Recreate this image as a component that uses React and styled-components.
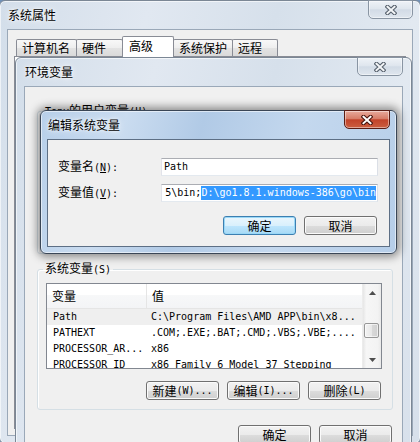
import React from 'react'
import styled, { createGlobalStyle, css } from 'styled-components'

const CJK = `"Noto Sans CJK SC", "Noto Sans", sans-serif`
const MONO = `"DejaVu Sans Mono", "Liberation Mono", monospace`

const GlobalStyle = createGlobalStyle`
  html, body {
    margin: 0;
    padding: 0;
    background: #6f90b8;
  }
`

const Desktop = styled.div`
  position: relative;
  width: 420px;
  height: 442px;
  overflow: hidden;
  background: #6f90b8;
  font-family: ${CJK};
  font-size: 12px;
  line-height: 14px;
  color: #000;
`

// a window lies on the desktop, so it is placed by its coordinates
const Window = styled.div`
  position: absolute;
  left: ${p => p.$x}px;
  top: ${p => p.$y}px;
  width: ${p => p.$w}px;
  height: ${p => p.$h}px;
  box-sizing: border-box;
  display: flex;
  flex-direction: column;
  padding: 0 ${p => p.$pad}px ${p => p.$pad}px;
  border: 1px solid ${p => (p.$active ? '#3a4656' : '#7b8795')};
  border-radius: 6px;
  background: ${p =>
    p.$active
      ? 'linear-gradient(105deg, #b7cfe9 0%, #cadcf0 22%, #b1cae6 42%, #c4d8ee 68%, #b6cee9 100%)'
      : 'linear-gradient(105deg, #d3deea 0%, #e1e8f1 28%, #d6e0eb 52%, #e2e9f1 78%, #d7e0eb 100%)'};
  box-shadow: ${p =>
    p.$active
      ? '0 0 9px 3px rgba(0, 0, 0, 0.42), inset 0 0 0 1px rgba(255, 255, 255, 0.55)'
      : 'inset 0 0 0 1px rgba(255, 255, 255, 0.6)'};
`

const TitleBar = styled.div`
  display: flex;
  align-items: flex-start;
  height: 28px;
  flex-shrink: 0;
`

const Title = styled.div`
  padding: 7px 0 0 1px;
  text-shadow: 0 0 7px rgba(255, 255, 255, 0.95), 0 0 3px #fff;
`

const CloseBtn = styled.div`
  box-sizing: border-box;
  width: ${p => p.$w}px;
  height: 19px;
  margin-left: auto;
  margin-top: -1px;
  display: flex;
  align-items: center;
  justify-content: center;
  border: 1px solid ${p => (p.$active ? '#5a1d14' : '#8995a3')};
  border-radius: 0 0 5px 5px;
  background: ${p =>
    p.$active
      ? 'linear-gradient(#e8aa9c 0%, #d77d68 45%, #c2432a 52%, #cb5e40 100%)'
      : 'linear-gradient(#eef2f7 0%, #dfe6ee 45%, #d2dbe6 52%, #dfe6ee 100%)'};
  box-shadow: inset 0 0 0 1px rgba(255, 255, 255, 0.45);
`

const Client = styled.div`
  flex: 1;
  min-height: 0;
  display: flex;
  flex-direction: column;
  background: #f0f0f0;
  border: 1px solid ${p => (p.$active ? '#5d6f85' : '#9aa8b8')};
`

/* tabs of the system properties window */
const TabRow = styled.div`
  display: flex;
  align-items: flex-end;
  height: 20px;
  padding: 6px 0 0 8px;
  flex-shrink: 0;
`

const Tab = styled.div`
  box-sizing: border-box;
  width: ${p => p.$w}px;
  height: ${p => (p.$sel ? 21 : 17)}px;
  margin-left: ${p => (p.$first ? 0 : -1)}px;
  margin-bottom: ${p => (p.$sel ? -1 : 0)}px;
  padding: ${p => (p.$sel ? '2px 0 0 6px' : '1px 0 0 5px')};
  border: 1px solid #898c95;
  border-bottom: none;
  border-radius: 2px 2px 0 0;
  position: relative;
  z-index: ${p => (p.$sel ? 1 : 0)};
  background: ${p =>
    p.$sel ? '#fff' : 'linear-gradient(#f8f8f8 0%, #eeeeee 50%, #e3e3e3 51%, #dadada 100%)'};
`

const TabPanel = styled.div`
  flex: 1;
  margin: 0 6px 6px;
  background: #fff;
  border: 1px solid #898c95;
`

/* environment variables window */
const EnvBody = styled.div`
  display: flex;
  flex-direction: column;
  padding: 16px 9px 0 12px;
`

const Group = styled.fieldset`
  margin: 0;
  min-width: 0;
  box-sizing: border-box;
  padding: 0 10px 9px 8px;
  border: 1px solid #d5dfe5;
  border-radius: 3px;
  box-shadow: inset 1px 1px 0 #fff;
  ${p => p.$h && css`height: ${p.$h}px;`}
  & + & {
    margin-top: 7px;
  }
`

const Legend = styled.legend`
  padding: 0 2px;
  margin-left: -3px;
  line-height: 14px;
`

const Mono = styled.span`
  font-family: ${MONO};
  font-size: 10px;
`

const Key = styled.span`
  text-decoration: underline;
`

const List = styled.div`
  margin-top: 6px;
  height: 86px;
  box-sizing: border-box;
  border: 1px solid #828790;
  background: #fff;
  display: flex;
  overflow: hidden;
`

const ListMain = styled.div`
  flex: 1;
  min-width: 0;
  display: flex;
  flex-direction: column;
  overflow: hidden;
`

const Header = styled.div`
  display: flex;
  height: 25px;
  flex-shrink: 0;
  box-sizing: border-box;
  border-bottom: 1px solid #e5e5e5;
  background: linear-gradient(#ffffff 0%, #ffffff 45%, #f7f8f9 46%, #f3f4f6 100%);
`

const HeadCell = styled.div`
  box-sizing: border-box;
  width: ${p => (p.$w ? `${p.$w}px` : 'auto')};
  flex: ${p => (p.$w ? 'none' : 1)};
  display: flex;
  align-items: center;
  padding-left: ${p => p.$pl}px;
  border-right: ${p => (p.$w ? '1px solid #e5e5e5' : 'none')};
`

const Row = styled.div`
  display: flex;
  height: 16px;
  flex-shrink: 0;
  background: ${p => (p.$sel ? '#efefef' : '#fff')};
  font-family: ${MONO};
  font-size: 10px;
  line-height: 16px;
  white-space: nowrap;
`

const Cell = styled.div`
  box-sizing: border-box;
  width: ${p => (p.$w ? `${p.$w}px` : 'auto')};
  flex: ${p => (p.$w ? 'none' : 1)};
  padding-left: ${p => p.$pl}px;
  overflow: hidden;
`

const ScrollBar = styled.div`
  width: 18px;
  flex-shrink: 0;
  display: flex;
  flex-direction: column;
  border-left: 1px solid #ececec;
  background: linear-gradient(to right, #e6e6e6 0%, #f6f6f6 18%, #f3f3f3 82%, #e9e9e9 100%);
`

const ScrollArrow = styled.div`
  height: 17px;
  flex-shrink: 0;
  display: flex;
  align-items: center;
  justify-content: center;
`

const Track = styled.div`
  flex: 1;
`

const Thumb = styled.div`
  box-sizing: border-box;
  height: 15px;
  margin: 22px 2px 0 1px;
  border: 1px solid #979797;
  border-radius: 2px;
  background: linear-gradient(to right, #f3f3f3 0%, #e8e8e8 50%, #d9d9d9 51%, #d0d0d0 100%);
  box-shadow: inset 0 0 0 1px rgba(255, 255, 255, 0.6);
`

const ButtonRow = styled.div`
  display: flex;
  justify-content: flex-end;
  gap: 8px;
  margin-top: ${p => p.$mt}px;
  margin-right: 1px;
`

const Button = styled.div`
  box-sizing: border-box;
  width: 73px;
  height: 19px;
  display: flex;
  align-items: center;
  justify-content: center;
  white-space: nowrap;
  border: 1px solid #707070;
  border-radius: 3px;
  background: linear-gradient(#f2f2f2 0%, #ebebeb 50%, #dddddd 51%, #cfcfcf 100%);
  box-shadow: inset 0 0 0 1px #fbfbfb;
  ${p =>
    p.$default &&
    css`
      border-color: #3c7fb1;
      background: linear-gradient(#eaf6fd 0%, #d9f0fc 50%, #bee6fd 51%, #a7d9f5 100%);
      box-shadow: inset 0 0 0 1px #9ad8f7;
    `}
`

/* edit dialog */
const EditBody = styled.div`
  display: flex;
  flex-direction: column;
  padding: 18px 11px 11px 10px;
`

const FieldRow = styled.div`
  display: flex;
  align-items: center;
  & + & {
    margin-top: 8px;
  }
`

const FieldLabel = styled.div`
  width: 103px;
  flex-shrink: 0;
  white-space: nowrap;
`

const Input = styled.div`
  flex: 1;
  min-width: 0;
  height: 18px;
  box-sizing: border-box;
  display: flex;
  align-items: center;
  justify-content: ${p => (p.$end ? 'flex-end' : 'flex-start')};
  padding: ${p => (p.$end ? '0 1px 0 0' : '0 0 0 2px')};
  overflow: hidden;
  white-space: nowrap;
  border: 1px solid;
  border-color: #abadb3 #dbdfe6 #e3e9ef #e2e3ea;
  background: #fff;
  font-family: ${MONO};
  font-size: 10px;
`

const Selected = styled.span`
  background: #3399ff;
  color: #fff;
  line-height: 14px;
`

const CloseIcon = ({ active }) => (
  <svg width="12" height="10" viewBox="0 0 12 10">
    <path
      d="M2.5 1.8 L9.5 8.2 M9.5 1.8 L2.5 8.2"
      stroke={active ? '#4a1710' : '#59636f'}
      strokeWidth="4.2"
      strokeLinecap="square"
      fill="none"
    />
    <path
      d="M2.5 1.8 L9.5 8.2 M9.5 1.8 L2.5 8.2"
      stroke={active ? '#ffffff' : '#f4f6f8'}
      strokeWidth="2"
      strokeLinecap="square"
      fill="none"
    />
  </svg>
)

const Arrow = ({ down }) => (
  <svg width="7" height="4" viewBox="0 0 7 4">
    <polygon points={down ? '0,0 7,0 3.5,4' : '0,4 7,4 3.5,0'} fill="#4d4d4d" />
  </svg>
)

const tabs = [
  { name: '计算机名', w: 61 },
  { name: '硬件', w: 47 },
  { name: '高级', w: 52, sel: true },
  { name: '系统保护', w: 60 },
  { name: '远程', w: 46 },
]

const sysVars = [
  { name: 'Path', value: 'C:\\Program Files\\AMD APP\\bin\\x8...', sel: true },
  { name: 'PATHEXT', value: '.COM;.EXE;.BAT;.CMD;.VBS;.VBE;....' },
  { name: 'PROCESSOR_AR...', value: 'x86' },
  { name: 'PROCESSOR_ID', value: 'x86 Family 6 Model 37 Stepping' },
]

const App = () => (
  <Desktop>
    <GlobalStyle />

    <Window $x={-1} $y={0} $w={422} $h={444} $pad={7}>
      <TitleBar>
        <Title>系统属性</Title>
        <CloseBtn $w={45}>
          <CloseIcon />
        </CloseBtn>
      </TitleBar>
      <Client>
        <TabRow>
          {tabs.map((t, i) => (
            <Tab key={t.name} $w={t.w} $sel={t.sel} $first={i === 0}>
              {t.name}
            </Tab>
          ))}
        </TabRow>
        <TabPanel />
      </Client>
    </Window>

    <Window $x={15} $y={57} $w={397} $h={420} $pad={8}>
      <TitleBar>
        <Title>环境变量</Title>
        <CloseBtn $w={46}>
          <CloseIcon />
        </CloseBtn>
      </TitleBar>
      <Client>
        <EnvBody>
          <Group $h={151}>
            <Legend>
              <Mono>Tony</Mono>的用户变量<Mono>(U)</Mono>
            </Legend>
          </Group>
          <Group>
            <Legend>
              系统变量<Mono>(S)</Mono>
            </Legend>
            <List>
              <ListMain>
                <Header>
                  <HeadCell $w={100} $pl={5}>变量</HeadCell>
                  <HeadCell $pl={5}>值</HeadCell>
                </Header>
                {sysVars.map(v => (
                  <Row key={v.name} $sel={v.sel}>
                    <Cell $w={100} $pl={6}>{v.name}</Cell>
                    <Cell $pl={4}>{v.value}</Cell>
                  </Row>
                ))}
              </ListMain>
              <ScrollBar>
                <ScrollArrow>
                  <Arrow />
                </ScrollArrow>
                <Track>
                  <Thumb />
                </Track>
                <ScrollArrow>
                  <Arrow down />
                </ScrollArrow>
              </ScrollBar>
            </List>
            <ButtonRow $mt={12}>
              <Button>新建<Mono>(W)...</Mono></Button>
              <Button>编辑<Mono>(I)...</Mono></Button>
              <Button>删除<Mono>(L)</Mono></Button>
            </ButtonRow>
          </Group>
          <ButtonRow $mt={15}>
            <Button>确定</Button>
            <Button>取消</Button>
          </ButtonRow>
        </EnvBody>
      </Client>
    </Window>

    <Window $x={40} $y={110} $w={357} $h={144} $pad={6} $active>
      <TitleBar>
        <Title>编辑系统变量</Title>
        <CloseBtn $w={46} $active>
          <CloseIcon active />
        </CloseBtn>
      </TitleBar>
      <Client $active>
        <EditBody>
          <FieldRow>
            <FieldLabel>
              变量名<Mono>(<Key>N</Key>):</Mono>
            </FieldLabel>
            <Input>Path</Input>
          </FieldRow>
          <FieldRow>
            <FieldLabel>
              变量值<Mono>(<Key>V</Key>):</Mono>
            </FieldLabel>
            <Input $end>
              5\bin;<Selected>D:\go1.8.1.windows-386\go\bin</Selected>
            </Input>
          </FieldRow>
          <ButtonRow $mt={14}>
            <Button $default>确定</Button>
            <Button>取消</Button>
          </ButtonRow>
        </EditBody>
      </Client>
    </Window>
  </Desktop>
)

export default App
